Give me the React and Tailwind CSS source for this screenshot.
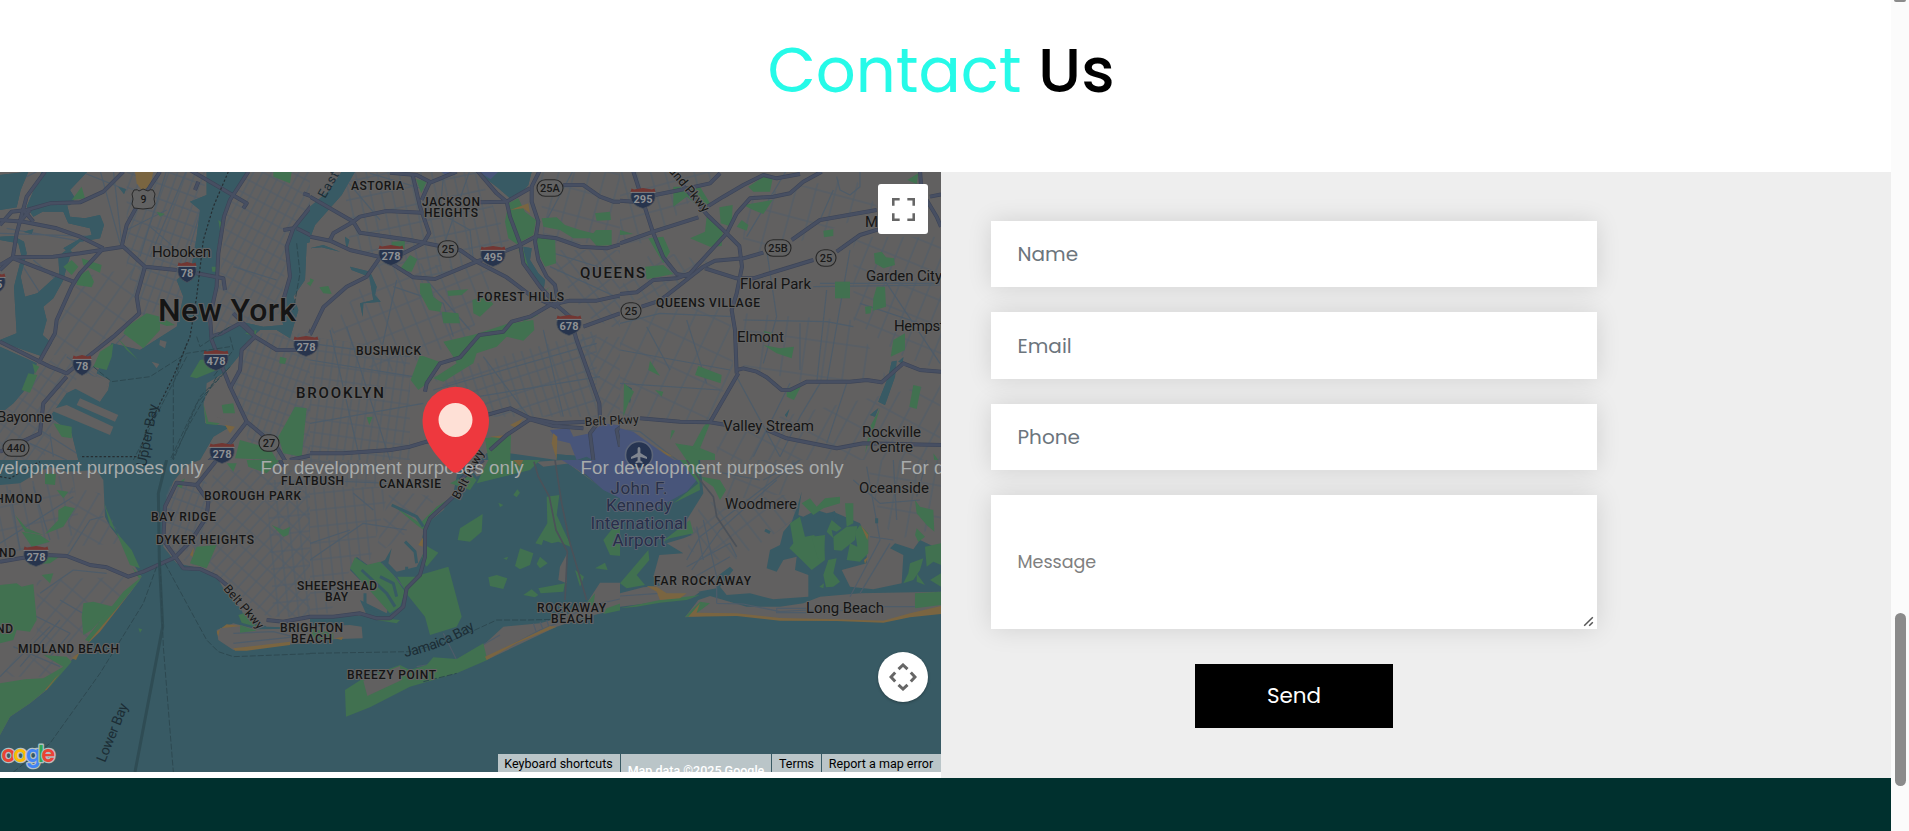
import React from "react";

const LAND = "#616060";
const WATER = "#385a64";
const GREEN = "#417150";
const BEACH = "#7a6541";
const AIRPORT = "#48557a";
const ROAD = "#474f62";
const STREET = "#4e5c69";

/* Each tile is drawn in its own thirds-of-a-pixel coordinates. */
const TILES = [
  {
    id: "nw", x: 0, y: 170, clip: [0, 0, 930, 870], base: LAND,
    districts: [
      ["M690 0 H930 V180 L870 180 L840 430 L640 500 L680 130Z", 28, 24],
      ["M380 0 H620 L570 380 L430 440 L380 300Z", 20, 25],
      ["M240 320 L430 290 L410 440 L270 540 L130 560Z", 35, 45],
      ["M730 490 H930 V870 H760 L700 650Z", 20, 21],
      ["M180 540 L330 640 L290 700 L200 680 L130 870 L0 870 V740Z", 35, 28],
    ],
    water: [
      "M0 15 L85 5 L62 60 L50 112 L0 120Z",
      "M125 5 H262 L210 60 L225 85 L210 105 L155 110 L100 140 L80 110Z",
      "M130 105 L200 100 L210 140 L255 145 L300 135 L312 165 L300 205 L240 215 L205 245 L190 235 L250 200 L275 195 L270 175 L205 160 L190 125 L130 125Z",
      "M0 200 L40 198 L72 215 L80 250 L62 320 L75 380 L112 370 L150 335 L178 310 L175 260 L205 235 L215 245 L200 290 L190 330 L160 385 L130 410 L140 450 L128 495 L155 520 L130 560 L0 515 L0 510 L50 490 L42 350 L65 260 L55 220 L0 210Z",
      "M0 530 L110 580 L100 620 L70 665 L40 700 L0 732Z",
      "M620 5 H740 L690 95 L668 135 L652 230 L650 320 L640 410 L622 450 L632 510 L690 480 L720 455 L790 470 L850 465 L840 430 L860 380 L870 300 L866 200 L960 70 V205 L920 220 L915 330 L880 380 L895 420 L870 505 L830 480 L780 480 L740 515 L715 560 L690 590 L630 640 L610 700 L615 760 L690 770 L640 800 L600 870 L235 870 L215 790 L150 740 L200 670 L240 650 L300 695 L325 660 L330 630 L290 610 L335 520 L420 540 L530 470 L550 380 L530 330 L575 290 L590 200 L600 120 L570 95 L620 75Z",
      "M355 50 L378 58 L372 72Z", "M70 185 L100 178 L95 192Z",
    ],
    land: [
      "M240 685 L355 735 L345 755 L230 705Z", "M150 720 L200 705 L340 770 L330 795Z",
      "M620 640 L690 600 L700 760 L650 740 L615 700Z",
      "M480 510 L500 515 L495 535 L478 525Z", "M455 575 L478 582 L470 595Z",
      "M330 630 L300 695 L215 650 L240 610Z",
    ],
    green: [
      "M380 470 L440 430 L480 440 L480 480 L430 535 L370 490Z", "M480 440 L525 465 L500 468 L478 460Z",
      "M300 545 L340 520 L335 560 L320 600 L280 590Z", "M350 500 L415 570 L380 540Z",
      "M570 620 L600 570 L655 560 L650 600 L590 625Z", "M230 320 L265 300 L282 335 L275 352 L230 345Z",
      "M190 290 L215 270 L235 290 L215 315Z", "M245 265 L305 285 L300 308 L250 285Z",
      "M215 90 L245 50 L255 85Z", "M820 5 H875 L870 40 L820 20Z",
      "M65 660 L85 610 L112 615 L90 668Z", "M160 760 L215 770 L215 805 L185 800Z",
      "M835 800 L885 710 L920 715 L905 860 L850 850Z", "M705 865 L720 810 L810 835 L830 870Z",
      "M665 705 L700 700 L705 730 L670 730Z", "M840 560 L860 565 L855 582 L838 580Z",
      "M610 700 L625 755 L660 760 L650 765 L618 762Z", "M920 340 L945 325 L935 352Z", "M655 150 L668 160 L660 180Z",
      "M97 580 L118 590 L105 612Z", "M735 490 L770 480 L765 500Z", "M470 125 L495 132 L480 140Z", "M635 290 H650 V305 H637Z",
    ],
    beach: ["M405 5 H460 L450 50 L425 60 L410 40Z", "M675 765 L705 770 L690 790Z"],
    streets: "M0 190 L300 200 M20 175 L250 215 M300 0 L360 220 M340 0 L365 220 M0 60 L110 5 M230 0 L380 60 M560 0 L450 260 M500 0 L420 260 M600 130 L540 330 M260 610 L430 440 M700 290 L830 330 M310 640 L200 560 M50 260 L140 400 M100 270 L170 330 M500 120 L380 180 M450 170 L520 230 M120 780 L230 850 M90 820 L200 870 M150 790 L160 860",
    roads: [
      "M0 165 L35 125 L80 120 L150 100 L240 97 L310 65 L370 5", "M135 5 L80 80 L50 190 L38 265",
      "M0 150 L70 155 L170 175 L240 200 L310 235", "M0 285 L40 262 L160 260 L240 250 L370 230 L435 290 L530 300",
      "M480 5 L410 110 L380 165 L365 230", "M435 290 L410 380 L418 430 L340 500 L270 555 L200 610 L150 590 L110 570 L0 515",
      "M310 235 L240 310 L215 350 L170 450 L165 490 L115 580", "M40 265 L220 335", "M0 300 L40 262",
      "M200 620 L130 700 L120 790 L0 845", "M570 0 L740 100 L730 115 M595 35 L585 60",
      "M745 5 L690 90 L672 140 L655 250 L650 350 L630 440 L635 510 L690 650 L740 755 L830 830 L860 880",
      "M590 310 L670 325 L675 360", "M632 500 L665 490 L720 460 L765 500 L830 540 L930 540",
      "M765 500 L725 540 L720 600 L690 655 M700 430 L760 490", "M740 755 L690 820 L620 880",
      "M960 75 L880 175 L850 180 M880 175 L860 230 L870 320 L850 390 M890 175 L960 210 M910 70 L950 85",
      "M930 490 L960 420", "M870 870 L960 850", "M70 120 L100 155 M60 155 L90 120",
    ],
    ferry: "M590 500 L600 530 L690 470 M280 590 L335 635 L450 620 L560 550 L690 530 M560 520 L520 640 L520 870 M560 560 L400 870 M690 590 L590 700 L510 870 M680 600 L600 680 L520 870 M650 620 L570 760 L515 870 M690 500 L700 540 L640 620 M890 220 L900 310 L880 420",
    border: "M685 5 L640 110 L610 210 L590 380 L570 500 L520 620 L440 780 L415 860 L240 860",
  },
  {
    id: "n", x: 310, y: 170, clip: [0, 0, 930, 870], base: LAND,
    districts: [
      ["M100 0 H500 L600 220 L340 340 L120 230Z", -12, 32],
      ["M0 500 L300 540 L300 870 H0Z", 8, 24], ["M210 270 L560 300 L480 500 L210 620 L60 480Z", -22, 40],
      ["M360 620 L860 480 V740 L530 740Z", -18, 27], ["M700 240 L930 240 V480 L830 440Z", -38, 34],
      ["M690 0 H930 V220 H700Z", 15, 45], ["M800 500 H930 V740 H870Z", 30, 30],
    ],
    water: [
      "M0 205 L0 110 L60 60 L95 5 L135 5 L95 75 L15 165Z", "M500 5 H665 L655 45 L625 80 L600 85 L560 50Z",
      "M640 230 L665 235 L660 270 L685 310 L705 330 L700 365 L680 330 L650 290Z",
      "M120 290 L180 305 L200 350 L195 375 L212 395 L160 400 L158 440 L150 400 L190 390 L178 320 L125 300Z",
      "M105 200 L118 210 L110 240Z", "M0 235 L40 225 L90 245 L35 232Z", "M480 900 L530 850 L700 850 L960 870 V900Z",
    ],
    land: ["M600 780 L720 780 L740 870 L600 850Z"],
    green: [
      "M245 215 L285 213 L283 237 L245 236Z", "M268 300 L300 255 L322 268 L305 305Z", "M330 340 L360 340 L370 380 L396 400 L390 425 L357 420 L330 370Z",
      "M395 425 L445 430 L450 460 L400 460Z", "M412 362 L475 358 L455 375 L415 378Z", "M487 390 L530 378 L550 402 L510 440 L490 430Z",
      "M400 515 L500 492 L590 462 L670 450 L673 480 L640 512 L590 500 L560 530 L500 550 L490 580 L400 635 L370 625 L440 580 L430 560Z",
      "M330 555 L388 575 L365 630 L325 660 L302 630Z", "M585 155 L595 100 L625 85 L645 125 L678 150 L670 195 L620 222 L595 205Z",
      "M680 200 H735 L738 280 L705 290 L685 250Z", "M625 240 L638 232 L655 290 L700 365 L720 350 L690 310 L668 235 L690 310 L720 350 L700 370 L670 320Z",
      "M695 145 L740 142 L765 165 L810 180 L850 190 L858 180 L905 180 L905 225 L860 228 L840 205 L790 205 L750 180 L700 170Z",
      "M855 130 L900 125 L903 150 L860 152Z", "M28 352 L55 348 L65 372 L40 370Z", "M318 28 L350 34 L334 70Z",
      "M525 805 L603 795 L600 900 H540Z", "M945 640 H960 V740 L938 740Z", "M170 742 L188 740 L178 765Z", "M640 440 L685 435 L640 455Z", "M0 325 L12 330 L0 350Z",
    ],
    beach: ["M540 800 L590 795 L570 805Z", "M730 790 L742 800 L740 870 L725 820Z", "M600 120 L655 100 L660 130 L640 115Z", "M600 765 L640 745 L620 775Z"],
    airport: ["M505 5 H565 L542 28Z", "M395 5 H420 L410 20Z", "M720 780 L778 775 L790 800 L840 790 L880 760 L960 770 V900 H900 L830 860 L800 870 L780 820 L740 810Z"],
    streets: "M0 520 L300 560 M0 570 L310 620 M60 480 L150 870 M110 470 L240 870 M520 560 L660 745 M700 480 L760 740 M370 660 L860 520 M380 700 L870 620 M400 230 L480 0 M430 500 L400 400 L250 350 M260 330 L210 560 M700 240 L960 320 M720 290 L960 400 M650 780 L670 870 M0 760 L340 700 M350 330 L480 480 M100 20 L210 150 M710 150 L790 0 M180 10 L350 60 M400 20 L390 130 L480 180 L490 270",
    roads: [
      "M240 8 L320 15 L362 37 L440 5", "M308 15 L330 110 L358 190 L340 220 L250 265", "M360 35 L335 90",
      "M0 80 L130 155 L150 188 L300 210 L400 230 L450 240 L500 275 L590 322 L660 375 L740 412",
      "M0 200 L60 212 L120 240 L215 262 L310 322 L375 327 L500 275 L620 230 L680 198 L740 205 L810 230 L890 235 L960 215",
      "M60 210 L70 190 L130 155 L150 140 L230 123 L335 128", "M210 262 L170 320 L110 350 L40 412 L0 495",
      "M500 0 L560 70 L590 95 L600 140 L630 220 L640 280 L690 350 L745 410 L780 440 L800 510 L868 700 L870 745",
      "M690 0 L665 50 L665 95 L685 155 L675 215 L685 270 L710 320 L735 345 L745 405",
      "M510 97 L590 95 L660 55 M760 45 L820 45 L870 80 L910 95 L960 95",
      "M345 665 L350 640 L390 580 L450 562 L508 495 L580 485 L605 455 L660 440 L720 405 L780 392 L860 392 L960 370",
      "M0 850 L100 850 L240 840 L300 830 L350 815 L420 805", "M530 735 L600 715 L660 745 L740 760 L830 755",
      "M540 840 L590 795 L660 748 L730 768 L820 775", "M820 470 L930 430", "M870 750 L840 790 L850 870", "M960 750 L920 780 L930 830",
    ],
  },
  {
    id: "ne", x: 620, y: 170, clip: [0, 0, 963, 870], base: LAND,
    districts: [
      ["M0 420 L330 400 L340 600 L270 750 H0Z", 25, 55], ["M370 430 L700 450 L800 620 L560 640 L370 590Z", 8, 62],
      ["M700 200 H963 V600 L850 560 L700 450Z", 22, 43], ["M0 0 H300 L90 220 H0Z", -15, 42],
      ["M370 80 L700 20 L780 120 L500 230 L370 260Z", 15, 58], ["M290 780 L960 640 V870 H290Z", 28, 50],
      ["M100 240 L290 280 L100 390 H0 V350Z", -32, 35],
    ],
    water: ["M775 695 L805 620 L815 575 L830 572 L825 620 L795 705Z", "M835 575 L850 562 L848 580Z", "M15 645 L35 655 L30 700Z", "M495 735 L508 718 L500 742Z", "M750 735 L775 715 L765 740Z"],
    land: [],
    green: [
      "M298 112 L338 105 L335 170 L302 160Z", "M210 205 L255 185 L260 140 L308 185 L305 228 L270 230Z", "M385 50 L430 20 L458 25 L450 65 L400 65Z",
      "M370 105 L458 90 L430 132 L400 120Z", "M350 170 L365 150 L385 165 L380 182Z", "M75 290 L130 285 L160 312 L80 328Z",
      "M85 205 L130 200 L150 245 L130 280Z", "M160 50 L240 50 L270 100 L255 125 L200 80 L160 110Z",
      "M762 250 L785 245 L798 262 L822 265 L825 285 L790 295 L765 280Z", "M645 335 H690 V385 H645Z",
      "M770 350 L795 350 L798 410 L758 422 L760 385Z", "M735 410 L755 408 L752 430 L737 432Z", "M610 182 L640 178 V198 L612 202Z",
      "M820 510 L855 490 V540 L812 560Z", "M430 525 L480 535 L522 530 L515 565 L470 550Z", "M235 588 L305 615 L302 640 L225 615Z",
      "M90 572 L120 618 L85 600Z", "M500 655 L545 645 L522 690 L500 680Z", "M880 645 L903 650 L890 717 L868 710Z",
      "M12 640 L42 665 L25 700 L10 740Z", "M165 820 L230 830 L285 852 V900 H220Z", "M278 740 L238 840 L215 835 L250 770Z",
      "M735 850 L750 770 L780 715 L760 780Z", "M862 30 L895 10 L890 42Z", "M155 780 L165 782 L150 810Z", "M0 180 L40 192 L0 195Z", "M105 660 L130 665 L125 680Z", "M940 850 L955 870 L945 890Z", "M430 482 L460 490 L440 497Z",
    ],
    beach: ["M110 830 L160 860 L140 855Z"],
    airport: ["M0 775 L40 785 L130 850 L180 880 V900 H0Z"],
    streets: "M0 460 L120 430 L340 440 M370 450 L620 455 L700 470 M540 460 L540 600 M440 240 L470 440 L430 580 M620 360 L590 640 M600 340 L960 340 M580 350 L960 345 M650 20 L660 60 L690 75 L720 50 L720 0 M350 620 L480 860 M510 640 L400 860 M600 640 L540 740 L480 860 M680 640 L620 820 M80 470 L150 600 M200 450 L260 640 M690 240 L620 640 M780 310 L960 580 M720 400 L960 480 M640 60 L600 150 M380 200 L500 0 M0 540 L330 600 M0 640 L300 660 M20 780 L60 785 L150 855 L200 890",
    roads: [
      "M40 5 L100 190 L130 262 L170 312 L210 320", "M0 372 L50 367 L100 330 L170 325 L210 310 L320 190 L350 130 L390 85 L460 80 L510 70 L550 35 L605 5",
      "M0 220 L100 185 L235 142 M262 110 L310 80 L370 45 L430 15 L470 25 L540 12", "M262 135 L320 190 L358 228 L366 290 L350 370 L335 420 L345 480 L350 610", "M155 5 L262 135",
      "M65 410 L120 392 L180 345 L250 290 L285 272 L370 265 L430 248 M515 210 L600 150 L770 120 M930 80 L963 73",
      "M255 295 L350 325 L400 325 L580 270 M650 245 L720 195 L785 175", "M350 600 L370 595 L410 605 L440 622 L485 660 L510 660 L560 635 L690 635 L740 630 L785 637 L850 580 L900 600 L963 605",
      "M60 745 L180 755 L270 757 L355 610 M270 757 L320 765", "M440 780 L500 805 L650 835 L730 820 L963 825", "M0 92 L40 95 M105 75 L180 60 L270 40 L300 10", "M900 0 L903 45 M920 90 L950 140 L963 170",
    ],
  },
  {
    id: "sw", x: 0, y: 460, clip: [0, 0, 930, 936], base: WATER,
    water: [],
    land: [
      "M0 75 L60 70 L110 40 L150 20 L200 35 L290 30 L310 60 L315 170 L330 200 L390 275 L405 320 L425 350 L390 400 L270 540 L215 600 L140 690 L90 730 L30 770 L0 825Z",
      "M560 15 L520 65 L495 130 L490 260 L530 310 L600 325 L650 350 L670 385 L725 450 L735 480 L760 475 L800 500 L960 505 V0 H600Z",
      "M650 510 L700 490 L770 508 L960 505 V545 L700 570 L655 540Z",
    ],
    districts: [
      ["M500 80 L620 60 V240 L530 290 L495 230Z", 20, 22], ["M640 30 H930 V470 L800 470 L680 370 L550 300 L620 200Z", 42, 29],
      ["M800 60 H930 V470 H820Z", -6, 30], ["M0 80 L220 40 L240 220 L0 290Z", -12, 40], ["M210 80 L300 100 L370 250 L200 260Z", 30, 38],
      ["M110 360 L370 350 L380 400 L160 650 L0 650 L110 520Z", 40, 46],
    ],
    green: [
      "M0 375 L50 370 L65 380 L100 372 L110 480 L90 515 L50 510 L40 540 L0 550Z", "M0 670 L75 658 L130 655 L190 620 L130 585 L200 590 L215 605 L150 680 L90 730 L30 770 L0 825Z",
      "M250 430 L280 425 L340 440 L275 510 L250 525 L245 470Z", "M370 395 L425 350 L395 320 L420 360 L270 545 L255 540Z",
      "M65 215 L120 225 L150 245 L95 260Z", "M45 165 L80 205 L130 225 L75 215Z", "M135 40 L168 42 L165 75 L135 72Z",
      "M175 150 L195 138 L225 145 L190 200 L135 222 L175 180Z", "M590 260 L650 255 L620 325 L570 310Z", "M715 465 L745 455 L768 500 L725 488Z",
      "M740 0 H840 L800 40 L745 20Z", "M680 10 H710 L700 35Z", "M815 195 L850 210 L870 200 L865 225 L850 230Z", "M125 345 L160 340 L150 370Z", "M170 90 L205 95 L190 115Z",
      "M312 130 L330 195 L395 270 L420 325 L390 315Z", "M85 315 L140 290 L190 282 L150 310Z", "M720 495 L770 512 L720 518Z", "M415 505 L427 508 L420 518Z", "M525 75 L555 55 L545 85Z",
    ],
    beach: ["M700 565 L870 545 V555 L740 572 L705 572Z", "M650 515 L680 493 L725 498 L660 505 L655 530Z", "M385 405 L300 515 L262 552 L270 540Z", "M215 595 L240 575 L228 600Z", "M140 690 L180 640 L165 655 L135 690Z", "M570 285 L582 260 L578 290Z"],
    streets: "M0 250 L220 110 M30 90 L60 270 M100 80 L150 240 M150 590 L210 520 L90 460 M60 620 L180 480 M180 420 L300 490 M120 400 L220 330 L320 340 M200 290 L270 180 L310 170 M0 650 L150 500 M40 560 L180 620 M700 520 L820 515 L900 535 M700 550 L890 530",
    roads: [
      "M0 305 L60 295 L140 285 L200 288 L270 315 L320 322 L385 350 L430 335 L525 292 L575 240 L620 170 L625 125 L590 75 L530 68 L495 140 L490 240 L550 325 L600 327 L650 350 L680 375",
      "M800 480 L850 485 L960 465", "M590 75 L650 0", "M840 0 L850 20",
    ],
    thickFerry: "M500 0 L475 100 L478 300 L488 500 L405 936",
    ferry: "M480 300 L490 560 L520 936 M495 310 L560 430 L620 540 L655 575 L700 590 L960 580 M470 320 L430 430 L300 640 L150 850 L40 936",
    border: "M0 50 L30 55 L90 20 L120 5",
  },
  {
    id: "s", x: 310, y: 460, clip: [0, 0, 930, 936], base: WATER,
    water: [],
    land: [
      "M0 0 H450 L430 100 L400 150 L345 195 L335 240 L345 270 L320 320 L260 335 L235 310 L245 265 L225 300 L180 320 L140 290 L120 330 L170 380 L235 440 L230 460 L150 420 L170 465 L0 475Z",
      "M0 500 L120 495 L155 500 L158 535 L0 540Z", "M515 560 L580 500 L690 490 L760 470 L830 430 L870 368 L930 368 L960 380 V440 L830 470 L740 500 L530 600Z",
      "M745 360 L750 320 L772 280 L770 370Z", "M450 0 L660 0 L540 30 L500 50 L480 20Z", "M680 5 L760 0 L870 80 L780 10 L700 20Z",
    ],
    districts: [["M0 80 L240 80 L180 300 L120 330 L60 460 H0Z", -6, 29], ["M240 90 L380 110 L330 190 L220 270 L200 260Z", 38, 38], ["M0 0 H200 V80 H0Z", 4, 28]],
    green: [
      "M330 345 L415 320 L455 470 L440 500 L360 525 L345 470 L285 395Z", "M262 350 L330 350 L300 380 L290 400Z",
      "M135 292 L170 315 L210 305 L250 345 L285 395 L270 440 L240 460 L200 415 L120 325Z",
      "M443 240 L450 205 L518 162 L515 215 L480 245Z", "M535 352 L560 345 L592 355 L580 387 L540 378Z", "M345 255 L385 278 L350 320 L335 300Z",
      "M630 265 L670 280 L660 315 L630 328 L615 318Z", "M690 290 L713 310 L690 325 L680 312Z", "M710 110 L748 105 L740 165 L785 262 L745 245 L725 250 L700 240 L695 255 L676 250 L712 190Z",
      "M685 385 L765 370 L760 395 L692 400Z", "M640 405 L665 388 L685 405 L675 412Z", "M880 240 L920 190 L960 210 V290 L900 285Z", "M855 325 L885 308 L893 330Z",
      "M242 130 L330 190 L380 140 L410 120 L340 210 L320 195Z", "M565 128 L580 135 L570 142Z", "M610 105 L622 88 L630 98 L620 112Z", "M580 295 L595 290 L590 300Z",
      "M108 770 L105 690 L160 655 L270 615 L300 630 L350 615 L370 592 L440 597 L520 550 L532 600 L440 640 L300 680 L180 742Z",
      "M420 70 L480 40 L500 60 L480 90Z", "M535 0 H690 L660 30 L500 70 L520 30Z", "M830 430 L855 400 L850 440Z", "M890 445 L960 420 V445 L880 462Z", "M170 470 L270 480 L260 490 L200 480Z", "M795 330 L822 350 L810 380Z", "M0 505 L70 520 L70 540 L0 535Z", "M930 360 L955 340 L945 375Z",
    ],
    overlay: ["M160 662 L270 618 L275 660 L172 708Z"],
    creek: "M245 135 L320 170 L340 200 M285 245 L315 275 L320 310 M155 330 L230 400 L255 440 M165 400 L165 435 L210 465 M210 350 L250 370 L260 410 M290 320 V330",
    beach: ["M530 600 L620 550 L740 500 L720 498 L600 555 L525 590Z", "M325 255 L340 230 L338 260Z", "M75 535 L100 530 L95 540Z", "M610 0 H640 L630 20Z"],
    airport: ["M755 0 H960 V130 L880 90 L830 45Z"],
    streets: "M0 60 L240 70 M0 250 L120 210 M0 300 L160 190 L290 210 M130 100 L190 150 M215 310 L290 390 M300 400 L390 500 M400 520 L440 600 M320 620 L440 600 L570 525 M560 580 L690 510 L740 490 L830 440 L960 410 M670 490 L680 520 M690 485 L700 510 M710 480 L720 510",
    roads: ["M430 110 L360 175 L345 210 L345 290 L330 345 L290 385 L280 440 L240 475 L200 475 L150 460 L70 470 L0 470", "M450 60 L520 0"],
    thin: "M672 5 L685 50 L718 110 L738 210 L772 275 L765 420 M735 0 L755 130 L780 250 L830 420",
    ferry: "M0 580 L300 575 L430 540 L560 480 L650 480 L740 478 M340 665 L440 640",
  },
  {
    id: "se", x: 620, y: 460, clip: [0, 0, 963, 936], base: WATER,
    water: [],
    land: [
      "M240 0 H963 V270 L900 240 L880 268 L825 250 L810 265 L850 285 L845 370 L760 388 L690 380 L665 330 L740 310 L740 230 L720 190 L640 155 L620 160 L590 150 L550 170 L535 165 L545 95 L535 130 L515 185 L490 215 L480 255 L450 270 L440 325 L470 335 L490 300 L530 290 L525 330 L565 345 V410 L460 418 L390 400 L320 405 L300 380 L340 330 L330 320 L290 350 L290 385 L210 400 L120 375 L100 350 L118 285 L190 280 L140 250 L190 235 L215 225 L200 180 L250 100Z",
      "M0 400 L70 382 L140 375 L240 395 L215 415 L120 425 L0 440Z",
      "M195 472 L235 420 L270 408 L380 440 L480 440 L550 430 L600 410 L720 400 L963 395 V455 L870 470 L790 485 L650 480 L480 478 L350 462Z",
    ],
    districts: [["M240 130 L540 100 L520 180 L480 210 L330 310 L200 270Z", -38, 45], ["M740 0 H963 V200 L830 240 L780 180Z", 10, 55], ["M330 0 L540 0 L530 100 L300 120Z", 22, 48]],
    green: [
      "M540 170 L510 190 L520 250 L508 265 L545 300 L575 330 L615 300 L612 250 L590 265 L583 225 L555 230Z", "M575 230 L615 225 L612 300 L595 300Z",
      "M640 230 L680 200 L712 198 L705 240 L665 272 L642 270Z", "M745 220 L720 195 L705 215 L712 260 L690 250 L680 300 L720 305 L745 280Z",
      "M618 382 L610 345 L625 300 L650 295 L640 340 L660 365 L640 380Z", "M620 215 L635 180 L665 205 L650 215 L635 210 L640 235Z",
      "M545 130 L570 115 L590 140 L615 115 L660 110 L660 130 L610 145 L580 165Z", "M675 130 L700 130 L700 190 L680 200Z",
      "M885 120 L900 140 L940 150 L943 215 L920 195 L890 160Z", "M915 260 L963 250 V315 L940 305 L920 320Z", "M870 310 L910 295 L900 330 L880 360 L850 370 L865 340Z", "M890 340 L915 375 L890 365Z",
      "M885 400 L963 395 V435 L885 445Z", "M0 370 L85 270 L88 300 L50 345 L75 375 L20 385Z", "M0 445 L120 420 L240 405 L200 420 L120 428 L50 440Z",
      "M245 50 L300 60 L318 90 L300 120 L280 80 L250 60Z", "M180 0 L235 0 L240 90 L160 130 L235 70Z", "M195 470 L240 425 L270 430 L215 470Z", "M120 250 L210 180 L220 220 L150 235Z", "M890 205 L915 230 L895 245 L885 225Z", "M598 380 L612 370 L610 385Z", "M930 360 L963 340 V380Z",
    ],
    beach: ["M205 470 L240 430 L230 458 L350 460 L480 474 L650 478 L790 482 L870 460 L963 438 V462 L870 472 L790 488 L650 483 L480 482 L350 468Z", "M80 378 L110 380 L140 400 L200 400 L180 415 L120 420 L110 395Z", "M722 195 L745 225 L742 240Z", "M732 300 L745 290 L735 312Z"],
    airport: ["M0 0 H195 L235 55 L200 95 L100 150 L0 150Z"],
    streets: "M200 300 L240 230 L540 0 M215 330 L300 210 L470 60 M200 320 L330 250 L350 290 M250 180 L290 350 L290 430 M230 200 L250 300 M430 60 L540 0 M190 370 L330 290 M740 20 L780 240 L690 410 M810 250 L720 400 M750 230 L820 240 M820 0 L830 180 M0 408 L120 400 M290 430 L370 432 L480 455 L560 450 L640 455 L740 440 L885 440 M470 445 H560 V458 H470Z M700 60 L780 130 L900 120 M260 30 L420 60 M920 0 L890 110",
    roads: [],
    thin: "M200 0 L240 60 L280 110 L290 170 L350 260",
    ferry: "",
    creek: "M435 210 L450 218 M770 175 V190 M640 155 L650 180",
  },
];

function Tile({ t }) {
  const [cx, cy, cw, ch] = t.clip;
  const draw = (list, fill) => (list || []).map((d, i) => <path key={fill + i} d={d} fill={fill} />);
  return (
    <g transform={`translate(${t.x} ${t.y}) scale(0.333333)`}>
      <defs>
        <clipPath id={`clip-${t.id}`}>
          <rect x={cx} y={cy} width={cw + 2} height={ch} />
        </clipPath>
        {(t.districts || []).map(([, angle, gap], i) => (
          <pattern key={i} id={`st-${t.id}-${i}`} width={gap} height={gap * 1.7} patternUnits="userSpaceOnUse" patternTransform={`rotate(${angle})`}>
            <path d={`M3 0 V${gap * 1.7} M0 3 H${gap}`} stroke={STREET} strokeWidth="3.4" fill="none" />
          </pattern>
        ))}
      </defs>
      <g clipPath={`url(#clip-${t.id})`} strokeLinejoin="round" fill="none">
        <rect x={cx} y={cy} width={cw + 2} height={ch} fill={t.base} />
        {draw(t.water, WATER)}
        {draw(t.land, LAND)}
        {t.base === WATER && draw(t.airport, AIRPORT)}
        {(t.districts || []).map(([d], i) => <path key={i} d={d} fill={`url(#st-${t.id}-${i})`} opacity="0.85" />)}
        <path d={t.streets} stroke={STREET} strokeWidth="3.6" />
        {t.base === LAND && draw(t.water, WATER)}
        {t.base === LAND && draw(t.land, LAND)}
        {t.base === LAND && draw(t.airport, AIRPORT)}
        {draw(t.green, GREEN)}
        {draw(t.overlay, LAND)}
        {draw(t.beach, BEACH)}
        {t.creek && <path d={t.creek} stroke={WATER} strokeWidth="9" />}
        {t.thin && <path d={t.thin} stroke="#4b5159" strokeWidth="5" />}
        {t.roads.map((d, i) => <path key={i} d={d} stroke="#3c4457" strokeWidth="12" />)}
        {t.roads.map((d, i) => <path key={i} d={d} stroke={ROAD} strokeWidth="8.5" />)}
        {t.thickFerry && <path d={t.thickFerry} stroke="#2f4c54" strokeWidth="9" />}
        {t.ferry && <path d={t.ferry} stroke="#2d4850" strokeWidth="3" strokeDasharray="18 6" />}
        {t.border && <path d={t.border} stroke="#262e32" strokeWidth="3.5" strokeDasharray="7 6" />}
      </g>
    </g>
  );
}

function Interstate({ x, y, n }) {
  const w = n.length > 2 ? 12.5 : 9.5;
  return (
    <g transform={`translate(${x} ${y})`}>
      <path d={`M${-w + 1} -6 H${w - 1} C${w + 1.5} 3 ${w - 3} 7.5 0 10.5 C${-w + 3} 7.5 ${-w - 1.5} 3 ${-w + 1} -6Z`} fill="#27344d" stroke="#4d535c" strokeWidth="0.8" />
      <path d={`M${-w + 1} -9.5 L${-w + 3.5} -8.6 L0 -10 L${w - 3.5} -8.6 L${w - 1} -9.5 L${w} -6 H${-w}Z`} fill="#723632" />
      <path d={`M${-w} -5.6 H${w}`} stroke="#8b8b8b" strokeWidth="0.8" />
      <text x="0" y="5" textAnchor="middle" fill="#8f9194" fontSize="11" fontWeight="700" fontFamily="Roboto, sans-serif">{n}</text>
    </g>
  );
}

function Route({ x, y, n }) {
  const w = n.length > 2 ? 13 : 10;
  return (
    <g transform={`translate(${x} ${y})`}>
      <rect x={-w} y="-8.2" width={w * 2} height="16.4" rx="8.2" fill="#626262" stroke="#272727" strokeWidth="1.1" />
      <text x="0" y="4" textAnchor="middle" fill="#191919" fontSize="11" fontWeight="500" fontFamily="Roboto, sans-serif">{n}</text>
    </g>
  );
}

/* [text, start x, baseline, width, font size, weight, rotation] */
const LABELS = [
  ["New York", 158, 321, 138, 32, 500], ["Hoboken", 152, 257, 59, 15, 400], ["Bayonne", -3, 422, 55, 15, 400],
  ["ASTORIA", 351, 190, 53, 12, 500], ["JACKSON", 422, 206, 58, 12, 500], ["HEIGHTS", 424, 217, 54, 12, 500],
  ["QUEENS", 580, 278, 65, 15, 500], ["FOREST HILLS", 477, 301, 87, 12, 500], ["QUEENS VILLAGE", 656, 307, 104, 12, 500],
  ["BUSHWICK", 356, 355, 65, 12, 500], ["BROOKLYN", 296, 398, 88, 15, 500], ["Floral Park", 740, 289, 71, 15, 400],
  ["Garden City", 866, 281, 76, 15, 400], ["Elmont", 737, 342, 47, 15, 400], ["Hempstead", 894, 331, 74, 15, 400],
  ["Mineola", 865, 227, 52, 15, 400], ["Valley Stream", 723, 431, 91, 15, 400], ["Rockville", 862, 437, 59, 15, 400], ["Centre", 870, 452, 43, 15, 400],
  ["Belt Pkwy", 585, 426, 54, 12, 400, -3], ["Belt Pkwy", 459, 500, 54, 12, 400, -62], ["Belt Pkwy", 223, 589, 54, 12, 400, 49], ["Grand Pkwy", 660, 161, 68, 12.5, 400, 50],
  ["Oceanside", 859, 493, 70, 15, 400], ["Woodmere", 725, 509, 72, 15, 400], ["Long Beach", 806, 613, 78, 15, 400],
  ["FAR ROCKAWAY", 654, 585, 97, 12, 500], ["ROCKAWAY", 537, 612, 69, 12, 500], ["BEACH", 551, 623, 42, 12, 500],
  ["CANARSIE", 379, 488, 62, 12, 500], ["FLATBUSH", 281, 485, 63, 12, 500], ["BOROUGH PARK", 204, 500, 97, 12, 500],
  ["BAY RIDGE", 151, 521, 65, 12, 500], ["DYKER HEIGHTS", 156, 544, 98, 12, 500], ["RICHMOND", -26, 503, 68, 12, 500],
  ["WESTERLAND", -67, 557, 83, 12, 500], ["ISLAND", -32, 633, 45, 12, 500], ["MIDLAND BEACH", 18, 653, 101, 12, 500],
  ["SHEEPSHEAD", 297, 590, 80, 12, 500], ["BAY", 325, 601, 23, 12, 500], ["BRIGHTON", 280, 632, 63, 12, 500], ["BEACH", 291, 643, 41, 12, 500], ["BREEZY POINT", 347, 679, 89, 12, 500],
];

const WATER_LABELS = [
  ["Upper Bay", 146, 467, 63, 14, -79], ["Lower Bay", 105, 763, 62, 14, -68], ["East River", 325, 199, 66, 13, -60],
];

function CityMap() {
  return (
    <svg className="block h-[600px] w-[941px]" viewBox="0 172 941 600" fontFamily="Roboto, sans-serif">
      {TILES.map((t) => <Tile key={t.id} t={t} />)}
      <g fill="#1c2d35">
        {WATER_LABELS.map(([s, x, y, w, size, a]) => (
          <text key={s} fontSize={size} textLength={w} transform={`translate(${x} ${y}) rotate(${a})`}>{s}</text>
        ))}
        <path id="jamaica" d="M405 657 Q448 648 479 626" fill="none" />
        <text fontSize="14" textLength="76"><textPath href="#jamaica">Jamaica Bay</textPath></text>
      </g>
      <g fill="#151515" stroke="#646464" strokeWidth="2.2" strokeLinejoin="round" paintOrder="stroke">
        {LABELS.map(([s, x, y, w, size, weight, a], i) => (
          <text key={i} fontSize={size} fontWeight={weight} textLength={w} transform={`translate(${x} ${y}) rotate(${a || 0})`}>{s}</text>
        ))}
      </g>
      <g fill="#272f49" stroke="#5f6473" strokeWidth="1.6" paintOrder="stroke" fontSize="17" textAnchor="middle">
        <text x="639" y="493.500" textLength="57">John F.</text>
        <text x="639" y="511" textLength="66">Kennedy</text>
        <text x="639" y="528.500" textLength="97">International</text>
        <text x="639" y="546" textLength="53">Airport</text>
      </g>
      <circle cx="639" cy="455" r="13.5" fill="#263451" stroke="#5c6578" strokeWidth="1.6" />
      <path d="M639 447 C640 447 640.4 448 640.4 449 V453 L647 457 V459 L640.4 457 V460.5 L642.5 462 V463.5 L639 462.5 L635.5 463.5 V462 L637.6 460.5 V457 L631 459 V457 L637.6 453 V449 C637.6 448 638 447 639 447Z" fill="#7f858f" />
      <Interstate x={187} y={272} n="78" /><Interstate x={82} y={365} n="78" /><Interstate x={216} y={360} n="478" />
      <Interstate x={306} y={346} n="278" /><Interstate x={222} y={453} n="278" /><Interstate x={36} y={556} n="278" />
      <Interstate x={391} y={255} n="278" /><Interstate x={493} y={256} n="495" /><Interstate x={569} y={325} n="678" />
      <Interstate x={643} y={198} n="295" /><Interstate x={-4} y={283} n="95" />
      <path d="M134 190 Q138 189 139 191 L143 189 L148 191 Q150 189 153 190 L155 194 Q153 199 155 204 L152 208 L143 209 L134 208 L132 204 Q134 199 132 194Z" fill="#626262" stroke="#292929" />
      <text x="143.5" y="203" textAnchor="middle" fontSize="10.5" fontWeight="500" fill="#191919">9</text>
      <Route x={16} y={448} n="440" /><Route x={269} y={443} n="27" /><Route x={448} y={249} n="25" /><Route x={550} y={188} n="25A" />
      <Route x={778} y={248} n="25B" /><Route x={826} y={258} n="25" /><Route x={631} y={311} n="25" />
      <g fill="#a8abab" fontSize="18.7" fontFamily="'Liberation Sans', sans-serif">
        {[-59.5, 260.5, 580.5, 900.5].map((x) => <text key={x} x={x} y="474" textLength="263">For development purposes only</text>)}
      </g>
      <path d="M460.500 470.500 Q455.500 475 450.500 470.500 C437 457 422.500 441 422.500 420 A33.200 33.200 0 0 1 489 420 C489 441 474 457 460.500 470.500Z" fill="#ee383e" />
      <circle cx="455.500" cy="420" r="17" fill="#fee0d6" />
      <g fontSize="22" fontFamily="Poppins, 'Open Sans', sans-serif" fontWeight="600" stroke="#b3c0c3" strokeWidth="2.6" strokeLinejoin="round" paintOrder="stroke">
        <text x="-17" y="762" fill="#4285f4">G</text>
        <text x="1.500" y="762" fill="#ea4335">o</text>
        <text x="13.500" y="762" fill="#fbbc05">o</text>
        <text x="26" y="762" fill="#4285f4">g</text>
        <text x="38" y="762" fill="#34a853">l</text>
        <text x="41.500" y="762" fill="#ea4335">e</text>
      </g>
    </svg>
  );
}

const FIELD = "block w-full bg-white px-[26.5px] text-[20px] text-[#6c757d] shadow-[0_0_25px_rgba(0,0,0,0.12)] outline-none";

export default function App() {
  return (
    <div className="flex h-[831px] w-[1909px] overflow-hidden bg-white font-[Poppins,Inter,sans-serif]">
      <div className="flex w-[1891px] flex-col">
        <h1 className="h-[172px] shrink-0 pt-[26px] pr-[9px] text-center text-[62.5px] leading-[88px] text-[#26fae8]">
          Contact <span className="font-medium text-black">Us</span>
        </h1>
        <section className="flex h-[606px] shrink-0">
          <div className="relative h-[600px] w-[941px] shrink-0 overflow-hidden">
            <CityMap />
            <button className="absolute top-[12px] left-[878px] flex size-[50px] items-center justify-center rounded-[3px] bg-white">
              <svg className="size-[23px]" viewBox="0 0 18 18" fill="#666666">
                <path d="M0 0v6h2V2h4V0H0zm16 0h-4v2h4v4h2V0h-2zm0 16h-4v2h6v-6h-2v4zM2 12H0v6h6v-2H2v-4z" />
              </svg>
            </button>
            <button className="absolute top-[480px] left-[878px] flex size-[50px] items-center justify-center rounded-full bg-white shadow-[0_1px_3px_rgba(0,0,0,0.3)]">
              <svg className="size-[28px]" viewBox="0 0 28 28" fill="none" stroke="#666666" strokeWidth="3">
                <path d="M9.500 6.200 L14 2 L18.500 6.200 M9.500 21.800 L14 26 L18.500 21.800 M6.200 9.500 L2 14 L6.200 18.500 M21.800 9.500 L26 14 L21.800 18.500" />
              </svg>
            </button>
            <div className="absolute right-0 bottom-0 flex h-[18px] gap-px overflow-hidden font-[Roboto,sans-serif] text-[12.5px] leading-[20px] whitespace-nowrap text-black">
              <span className="w-[122px] bg-[#bac5c8] pr-px text-center">Keyboard shortcuts</span>
              <span className="w-[150px] bg-[#bac5c8] pt-[7px] text-center font-medium text-white">Map data ©2025 Google</span>
              <span className="w-[49px] bg-[#bac5c8] text-center">Terms</span>
              <span className="w-[119px] bg-[#bac5c8] pr-px text-center">Report a map error</span>
            </div>
          </div>
          <div className="flex-1 bg-[#eeeeee] pt-[49px] pl-[50px]">
            <form className="flex w-[606px] flex-col gap-[25px]">
              <input className={`${FIELD} h-[66px] placeholder:text-[#6c757d]`} placeholder="Name" />
              <input className={`${FIELD} h-[67px] placeholder:text-[#6c757d]`} placeholder="Email" />
              <input className={`${FIELD} h-[66px] placeholder:text-[#6c757d]`} placeholder="Phone" />
              <div className="relative">
                <textarea className="block h-[134px] w-full resize-none bg-white px-[26.5px] pt-[54px] text-[17.5px] leading-[26px] shadow-[0_0_25px_rgba(0,0,0,0.12)] outline-none placeholder:text-[#808080]" placeholder="Message" />
                <svg className="absolute right-[3px] bottom-[2px] size-[11px]" viewBox="0 0 11 11" fill="none" stroke="#555555" strokeWidth="1.5">
                  <path d="M1.200 9.800 L9.800 1.200 M6.200 9.800 L9.800 6.200" />
                </svg>
              </div>
              <button type="button" className="mt-[10px] h-[64px] w-[198px] self-center bg-black pt-px text-[21.5px] text-white">Send</button>
            </form>
          </div>
        </section>
        <footer className="h-[53px] shrink-0 bg-[#00302e]" />
      </div>
      <div className="relative w-[18px] bg-[#fbfbfb]">
        <div className="absolute top-0 left-[3px] h-[2px] w-[12px] rounded-b-full bg-[#8b8b8b]" />
        <div className="absolute top-[613px] left-[4px] h-[173px] w-[11px] rounded-full bg-[#8b8b8b]" />
      </div>
    </div>
  );
}
